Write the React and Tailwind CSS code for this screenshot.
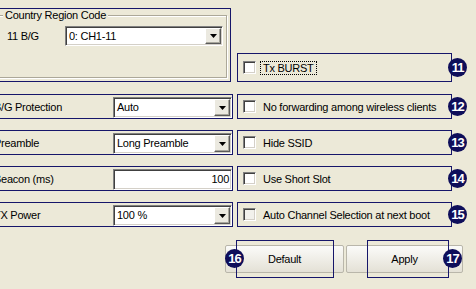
import React from 'react';

const NAVY = 'border-[#16166a]';

const Badge = ({ n, className = '' }) => (
  <div
    className={`w-[19px] h-[19px] rounded-full bg-[#0e0e5a] text-white font-bold text-[13px] tracking-[-1px] leading-none flex items-center justify-center shrink-0 ${className}`}
  >
    {n}
  </div>
);

const Arrow = () => (
  <svg width="7" height="4" viewBox="0 0 7 4">
    <path d="M0 0h7L3.5 4z" fill="#000" />
  </svg>
);

const Sunken = ({ className = '', children }) => (
  <div
    className={`flex bg-white border border-t-[#808080] border-l-[#808080] border-r-white border-b-white shadow-[inset_1px_1px_0_#404040,inset_-1px_-1px_0_#d4d0c8] p-[1px] ${className}`}
  >
    {children}
  </div>
);

const Select = ({ value, className }) => (
  <Sunken className={className}>
    <div className="flex-1 pl-[2px] flex items-center whitespace-nowrap">{value}</div>
    <div className="w-[16px] h-full bg-[#ebe9e0] border border-t-white border-l-white border-r-[#5a5a5a] border-b-[#5a5a5a] shadow-[inset_-1px_-1px_0_#a8a69c] flex items-center justify-center">
      <Arrow />
    </div>
  </Sunken>
);

const Checkbox = ({ dim }) => (
  <div
    className={`w-[13px] h-[13px] shrink-0 border border-t-[#808080] border-l-[#808080] border-r-white border-b-white shadow-[inset_1px_1px_0_#404040,inset_-1px_-1px_0_#d4d0c8] ${dim ? 'bg-[#f2f1ec]' : 'bg-white'}`}
  />
);

const OptionBox = ({ label, n, focus, dim, h = 'h-[25px]' }) => (
  <div className="flex items-center">
    <div className={`w-[215px] ${h} border ${NAVY} flex items-center pl-[5px]`}>
      <Checkbox dim={dim} />
      <span className={`ml-[4px] px-[2px] leading-[12px] ${focus ? 'border border-dotted border-black' : 'border border-transparent'}`}>
        {label}
      </span>
    </div>
    <Badge n={n} className="-ml-[4px] relative" />
  </div>
);

const LeftRow = ({ label, children }) => (
  <div className={`-ml-[12px] w-[245px] h-[25px] border ${NAVY} flex items-start pt-[2px] pl-[5px]`}>
    <div className="w-[119px] leading-[21px] whitespace-nowrap">{label}</div>
    {children}
  </div>
);

const rows = [
  { label: 'B/G Protection', value: 'Auto', opt: 'No forwarding among wireless clients', n: 12 },
  { label: 'Preamble', value: 'Long Preamble', opt: 'Hide SSID', n: 13 },
  { label: 'Beacon (ms)', input: '100', opt: 'Use Short Slot', n: 14 },
  { label: 'TX Power', value: '100 %', opt: 'Auto Channel Selection at next boot', n: 15, dim: true },
];

export default function App() {
  return (
    <div className="w-[476px] h-[289px] overflow-hidden bg-[#ece9d8] text-black text-[11px] tracking-[-0.25px] font-['Liberation_Sans',Arial,sans-serif]">
      <div className="pt-[8px] flex flex-col">
        {/* Country region + Tx burst */}
        <div className="flex h-[74px]">
          <div className={`-ml-[12px] w-[243px] h-[74px] border ${NAVY} shrink-0`}>
            <div className="ml-[3px] mt-[6px] w-[235px] h-[63px] border border-[#aca899] shadow-[inset_1px_1px_0_#fff,1px_1px_0_#fff]">
              <div className="-mt-[7px] ml-[10px] px-[2px] w-fit bg-[#ece9d8] leading-[13px]">Country Region Code</div>
              <div className="mt-[4px] flex items-center">
                <div className="ml-[14px] w-[58px]">11 B/G</div>
                <Select value="0: CH1-11" className="w-[158px] h-[20px]" />
              </div>
            </div>
          </div>
          <div className="ml-[6px] mt-[45px]">
            <OptionBox label="Tx BURST" n={11} focus h="h-[29px]" />
          </div>
        </div>

        {/* Settings rows */}
        <div className="mt-[12px] flex flex-col gap-[11px]">
          {rows.map((r) => (
            <div key={r.n} className="flex items-center h-[25px]">
              <LeftRow label={r.label}>
                {r.input ? (
                  <Sunken className="w-[119px] h-[21px]">
                    <div className="flex-1 text-right pr-[1px] leading-[17px]">{r.input}</div>
                  </Sunken>
                ) : (
                  <Select value={r.value} className="w-[119px] h-[21px]" />
                )}
              </LeftRow>
              <div className="ml-[4px]">
                <OptionBox label={r.opt} n={r.n} dim={r.dim} />
              </div>
            </div>
          ))}
        </div>

        {/* Buttons */}
        <div className="relative mt-[18px] ml-[225px] h-[28px] flex gap-[2px]">
          <button className="w-[119px] h-[28px] rounded-[2px] border border-[#b9b6aa] bg-gradient-to-b from-[#fbfbf9] to-[#e4e1d6]">
            Default
          </button>
          <button className="w-[117px] h-[28px] rounded-[2px] border border-[#b9b6aa] bg-gradient-to-b from-[#fbfbf9] to-[#e4e1d6]">
            Apply
          </button>
          <div className={`absolute left-[11px] -top-[5px] w-[98px] h-[38px] border ${NAVY}`} />
          <div className={`absolute left-[142px] -top-[5px] w-[82px] h-[38px] border ${NAVY}`} />
          <Badge n={16} className="absolute left-0 top-[4px]" />
          <Badge n={17} className="absolute left-[218px] top-[4px]" />
        </div>
      </div>
    </div>
  );
}
